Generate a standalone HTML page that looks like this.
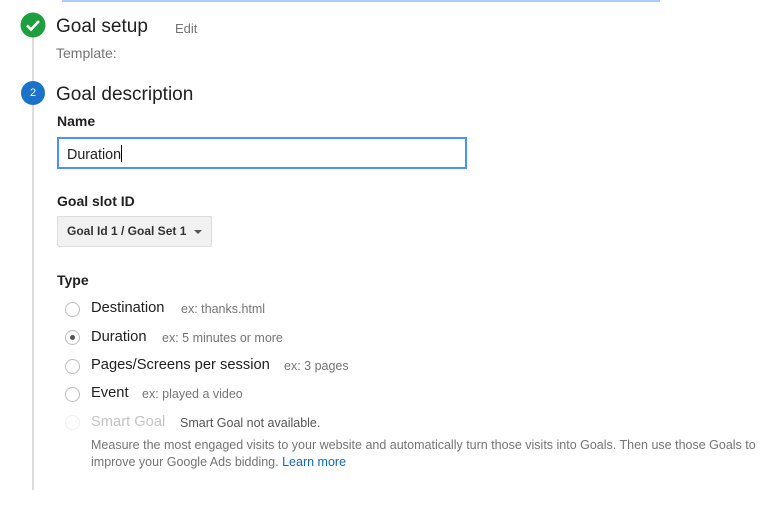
<!DOCTYPE html>
<html><head><meta charset="utf-8"><style>
body{margin:0;width:774px;height:515px;background:#fff;font-family:"Liberation Sans",sans-serif;position:relative;overflow:hidden;color:#212121}
.a{position:absolute;white-space:nowrap}
.radio{position:absolute;width:15px;height:15px;border:1px solid #bdbdbd;border-radius:50%;box-sizing:border-box;background:#fff}
.lab{font-size:14.7px;color:#212121}
.ex{font-size:12.5px;color:#757575}
</style></head><body>
<div class="a" style="left:62px;top:0;width:598px;height:1.5px;background:#aecbfa"></div>
<div class="a" style="left:32px;top:36px;width:1.5px;height:454px;background:#ddd"></div>
<svg class="a" style="left:20px;top:12px" width="26" height="26" viewBox="0 0 26 26"><circle cx="13" cy="13" r="12.5" fill="#1e9e3e"/><path d="M7 13.5l4 4 8-8.5" stroke="#fff" stroke-width="2.6" fill="none"/></svg>
<div class="a" style="left:56px;top:16px;font-size:19px;color:#212121">Goal setup</div>
<div class="a" style="left:175px;top:21px;font-size:13px;color:#757575">Edit</div>
<div class="a" style="left:56px;top:45px;font-size:14px;color:#757575">Template:</div>
<div class="a" style="left:21px;top:81px;width:24px;height:24px;border-radius:50%;background:#1a73c9;color:#fff;font-size:11px;text-align:center;line-height:24px">2</div>
<div class="a" style="left:56px;top:84px;font-size:19px">Goal description</div>
<div class="a" style="left:57px;top:113px;font-size:14px;font-weight:bold">Name</div>
<div class="a" style="left:57px;top:137px;width:410px;height:32px;border:2px solid #4d90fe;box-sizing:border-box"></div>
<div class="a" style="left:67px;top:145px;font-size:14.3px">Duration<span style="display:inline-block;width:1px;height:17px;background:#000;vertical-align:-3px"></span></div>
<div class="a" style="left:57px;top:193px;font-size:14px;font-weight:bold">Goal slot ID</div>
<div class="a" style="left:57px;top:216px;width:155px;height:31px;background:#f1f1f1;border:1px solid #ddd;box-sizing:border-box;border-radius:2px"></div>
<div class="a" style="left:67px;top:224px;font-size:12px;font-weight:bold;color:#333">Goal Id 1 / Goal Set 1</div>
<div class="a" style="left:194px;top:230px;width:0;height:0;border-left:4px solid transparent;border-right:4px solid transparent;border-top:4px solid #555"></div>
<div class="a" style="left:57px;top:272px;font-size:14px;font-weight:bold">Type</div>
<div class="radio" style="left:65px;top:302px"></div>
<div class="a lab" style="left:91px;top:300px">Destination</div>
<div class="a ex" style="left:181px;top:302px">ex: thanks.html</div>
<div class="radio" style="left:65px;top:330px"><div style="position:absolute;left:4px;top:4px;width:5px;height:5px;border-radius:50%;background:#555"></div></div>
<div class="a lab" style="left:91px;top:329px">Duration</div>
<div class="a ex" style="left:162px;top:331px">ex: 5 minutes or more</div>
<div class="radio" style="left:65px;top:359px"></div>
<div class="a lab" style="left:91px;top:357px">Pages/Screens per session</div>
<div class="a ex" style="left:284px;top:359px">ex: 3 pages</div>
<div class="radio" style="left:65px;top:387px"></div>
<div class="a lab" style="left:91px;top:385px">Event</div>
<div class="a ex" style="left:142px;top:387px">ex: played a video</div>
<div class="radio" style="left:65px;top:415px;border-color:#f0f0f0"></div>
<div class="a lab" style="left:91px;top:414px;color:#c4c4c4">Smart Goal</div>
<div class="a ex" style="left:180px;top:416px;color:#555">Smart Goal not available.</div>
<div class="a ex" style="left:91px;top:438px;color:#757575">Measure the most engaged visits to your website and automatically turn those visits into Goals. Then use those Goals to</div>
<div class="a ex" style="left:91px;top:455px;color:#757575">improve your Google Ads bidding. <span style="color:#1565c0">Learn more</span></div>
</body></html>
